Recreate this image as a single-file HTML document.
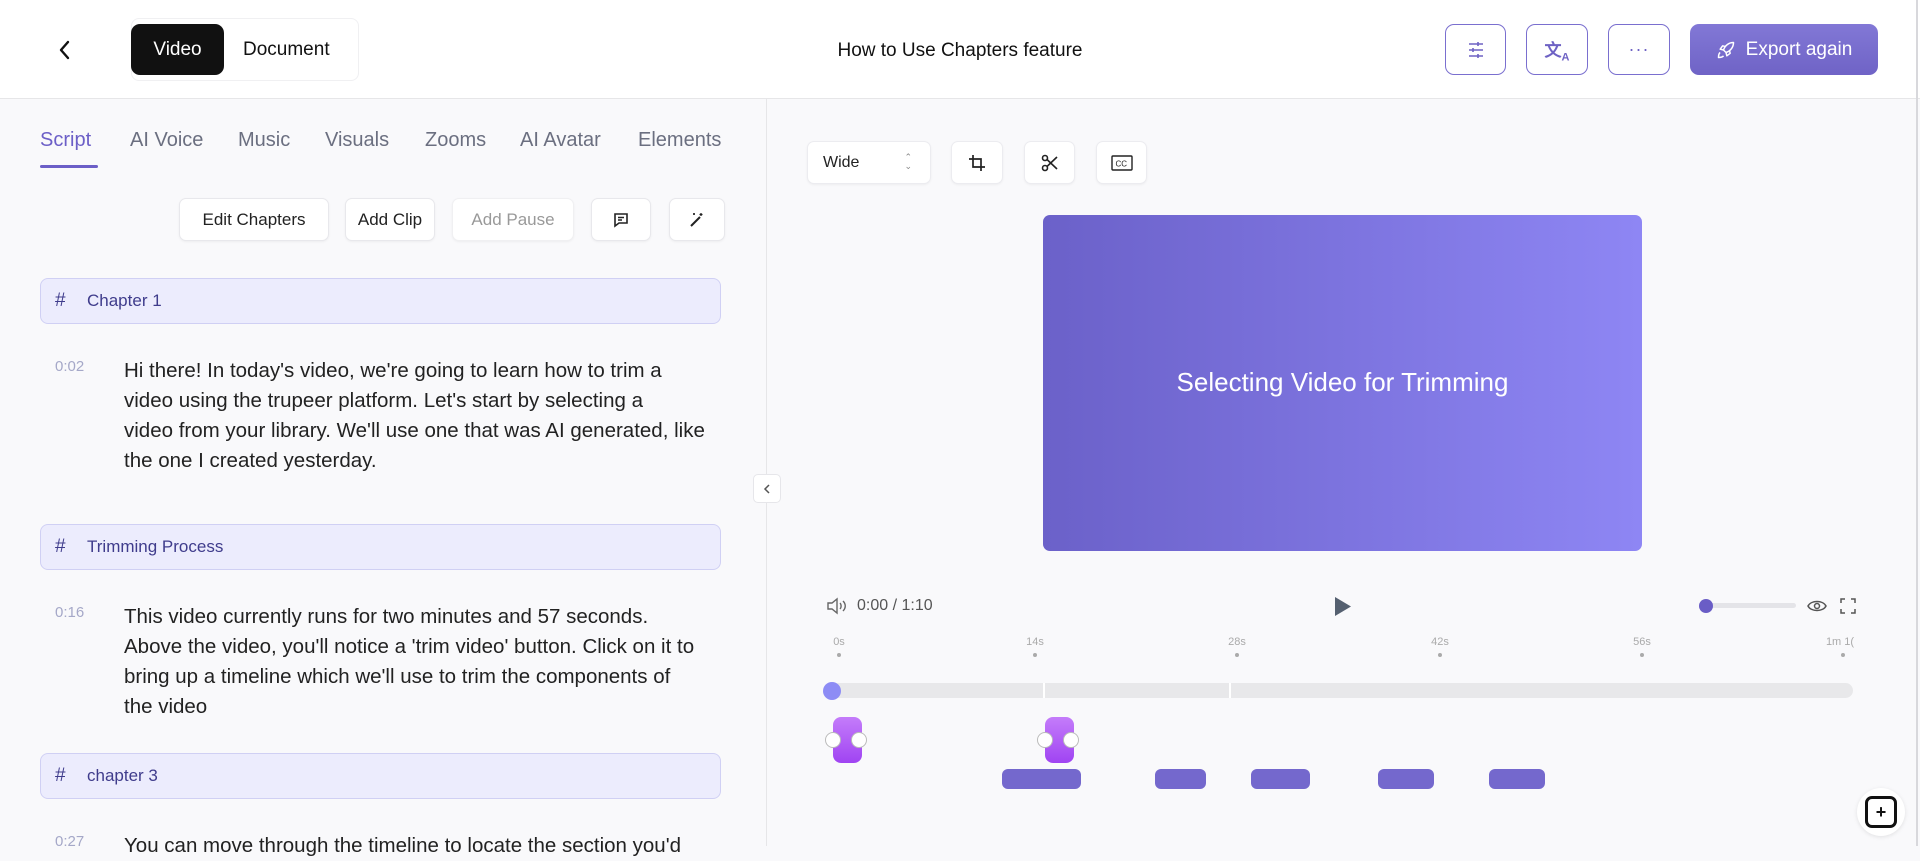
<!DOCTYPE html>
<html><head><meta charset="utf-8">
<style>
*{box-sizing:border-box;margin:0;padding:0}
body{width:1920px;height:846px;overflow:hidden;background:#f9f9fb;font-family:"Liberation Sans",sans-serif;position:relative;color:#1a1a1a}
.a{position:absolute}
.hdr{left:0;top:0;width:1920px;height:99px;background:#fff;border-bottom:1px solid #e6e6e8}
.ib{border:1.5px solid #7a6fcf;border-radius:9px;background:#fff;display:flex;align-items:center;justify-content:center;top:24px;height:51px}
.tab{top:129px;font-size:20px;color:#6b6f80}
.btn{top:198px;height:43px;background:#fff;border:1px solid #e8e8ec;border-radius:7px;display:flex;align-items:center;justify-content:center;font-size:17px;color:#222;box-shadow:0 1px 2px rgba(0,0,0,.05)}
.ch{left:40px;width:681px;height:46px;background:#ececfd;border:1.5px solid #d0d0f4;border-radius:8px;font-size:17px;color:#3f3c8c;display:flex;align-items:center}
.ch b{font-weight:normal;margin-left:14px;width:32px;font-size:19px}
.tm{left:55px;font-size:15px;color:#a5a8c8}
.p{left:124px;white-space:nowrap;font-size:20.5px;line-height:30px;color:#222}
.tb{height:43px;top:141px;background:#fff;border:1px solid #ececf0;border-radius:7px;display:flex;align-items:center;justify-content:center;box-shadow:0 1px 2px rgba(0,0,0,.05)}
.ml{top:636px;font-size:11px;color:#aaa;transform:translateX(-50%)}
.md{top:653px;width:4px;height:4px;border-radius:2px;background:#aaa;margin-left:-2px}
.bar{top:769px;height:20px;background:#7468cd;border-radius:6px}
.zc{top:717px;width:29px;height:46px;border-radius:8px;background:linear-gradient(#c47cfa,#a044f2)}
.zc i{position:absolute;top:15px;width:16px;height:16px;border-radius:8px;background:#fff;border:1.5px solid #bbb}
</style></head><body>
<div class="a hdr"></div>
<svg class="a" style="left:56px;top:39px" width="18" height="22" viewBox="0 0 18 22"><path d="M12 3L5 11l7 8" fill="none" stroke="#111" stroke-width="2.4" stroke-linecap="round" stroke-linejoin="round"/></svg>
<div class="a" style="left:131px;top:18px;width:228px;height:63px;border:1px solid #f0f0f2;border-radius:8px;background:#fff"></div>
<div class="a" style="left:131px;top:24px;width:93px;height:51px;background:#111;border-radius:9px;color:#fff;font-size:19px;display:flex;align-items:center;justify-content:center">Video</div>
<div class="a" style="left:243px;top:39px;font-size:19px;color:#111">Document</div>
<div class="a" style="left:0;width:1920px;top:40px;text-align:center;font-size:19px;color:#111;padding-left:0">How to Use Chapters feature</div>
<div class="a ib" style="left:1445px;width:61px"><svg width="20" height="20" viewBox="0 0 20 20" stroke="#6e62c4" stroke-width="1.6" fill="none"><path d="M3 4h14M3 10h14M3 16h14"/><path d="M12 2v4M7 8v4M12 14v4"/></svg></div>
<div class="a ib" style="left:1526px;width:62px"><span style="color:#6e62c4;font-size:17px;font-weight:bold">文<sub style="font-size:11px">A</sub></span></div>
<div class="a ib" style="left:1608px;width:62px"><span style="color:#6e62c4;font-size:18px;letter-spacing:1px">···</span></div>
<div class="a" style="left:1690px;top:24px;width:188px;height:51px;border-radius:9px;background:linear-gradient(#8278d6,#6f63c6);color:#fff;font-size:19px;display:flex;align-items:center;justify-content:center;gap:10px"><svg width="20" height="20" viewBox="0 0 24 24" fill="none" stroke="#fff" stroke-width="1.8" stroke-linejoin="round"><path d="M5 15c-1.5 1-2 4-2 6 2 0 5-.5 6-2M9 12c2-6 7-9 12-9 0 5-3 10-9 12zM9 12l-4-1 3-4 4 1M12 15l1 4 4-3-1-4"/></svg>Export again</div>

<div class="a" style="left:766px;top:99px;width:1px;height:747px;background:#e6e6e8"></div>
<div class="a" style="left:1916px;top:0;width:2px;height:846px;background:#d8d8dc"></div>

<div class="a tab" style="left:40px;color:#6c5fc7">Script</div>
<div class="a tab" style="left:130px">AI Voice</div>
<div class="a tab" style="left:238px">Music</div>
<div class="a tab" style="left:325px">Visuals</div>
<div class="a tab" style="left:425px">Zooms</div>
<div class="a tab" style="left:520px">AI Avatar</div>
<div class="a tab" style="left:638px">Elements</div>
<div class="a" style="left:40px;top:165px;width:58px;height:3px;background:#6c5fc7;border-radius:2px"></div>

<div class="a btn" style="left:179px;width:150px">Edit Chapters</div>
<div class="a btn" style="left:345px;width:90px">Add Clip</div>
<div class="a btn" style="left:452px;width:122px;color:#999;border-color:#f0f0f2">Add Pause</div>
<div class="a btn" style="left:591px;width:60px"><svg width="18" height="18" viewBox="0 0 18 18" fill="none" stroke="#222" stroke-width="1.6"><path d="M3 3h12v9H7l-4 3z"/><path d="M6 6.5h6M6 9h4"/></svg></div>
<div class="a btn" style="left:669px;width:56px"><svg width="18" height="18" viewBox="0 0 18 18" fill="none" stroke="#222" stroke-width="2"><path d="M3 15l9-9"/><path d="M13 2v3M11.5 3.5h3M6 2v2M5 3h2" stroke-width="1.3"/></svg></div>

<div class="a ch" style="top:278px"><b>#</b>Chapter 1</div>
<div class="a tm" style="top:358px">0:02</div>
<div class="a p" style="top:356px">Hi there! In today's video, we're going to learn how to trim a<br>video using the trupeer platform. Let's start by selecting a<br>video from your library. We'll use one that was AI generated, like<br>the one I created yesterday.</div>
<div class="a ch" style="top:524px"><b>#</b>Trimming Process</div>
<div class="a tm" style="top:604px">0:16</div>
<div class="a p" style="top:602px">This video currently runs for two minutes and 57 seconds.<br>Above the video, you'll notice a 'trim video' button. Click on it to<br>bring up a timeline which we'll use to trim the components of<br>the video</div>
<div class="a ch" style="top:753px"><b>#</b>chapter 3</div>
<div class="a tm" style="top:833px">0:27</div>
<div class="a p" style="top:831px">You can move through the timeline to locate the section you'd</div>

<div class="a" style="left:753px;top:474px;width:28px;height:29px;background:#fff;border:1px solid #e6e6ea;border-radius:5px;display:flex;align-items:center;justify-content:center"><svg width="10" height="12"><path d="M7 2L3 6l4 4" fill="none" stroke="#555" stroke-width="1.5"/></svg></div>

<div class="a tb" style="left:807px;width:124px;justify-content:flex-start;padding-left:15px;font-size:16px;color:#222">Wide<span style="position:absolute;right:18px;top:11px;font-size:9px;color:#888;line-height:9px">⌃<br>⌄</span></div>
<div class="a tb" style="left:951px;width:52px"><svg width="18" height="18" viewBox="0 0 18 18" fill="none" stroke="#222" stroke-width="1.7"><path d="M5 1v12h12M1 5h12v12"/></svg></div>
<div class="a tb" style="left:1024px;width:51px"><svg width="18" height="18" viewBox="0 0 18 18" fill="none" stroke="#222" stroke-width="1.6"><circle cx="4" cy="14" r="2.5"/><circle cx="4" cy="4" r="2.5"/><path d="M6 12.5L16 3M6 5.5L16 15"/></svg></div>
<div class="a tb" style="left:1096px;width:51px"><svg width="22" height="16" viewBox="0 0 22 16" fill="none" stroke="#222" stroke-width="1.4"><rect x="1" y="1" width="20" height="14" rx="1"/><text x="4.5" y="11.5" font-size="8" font-family="Liberation Sans" fill="#222" stroke="none">CC</text></svg></div>

<div class="a" style="left:1043px;top:215px;width:599px;height:336px;border-radius:7px;background:linear-gradient(90deg,#6b61c9,#8e86f4);color:#fff;font-size:26px;display:flex;align-items:center;justify-content:center;padding-bottom:2px">Selecting Video for Trimming</div>

<svg class="a" style="left:826px;top:597px" width="22" height="18" viewBox="0 0 22 18" fill="none" stroke="#666" stroke-width="1.4"><path d="M2 6h4l5-4v14l-5-4H2z"/><path d="M14 6c1.5 1.5 1.5 4.5 0 6M17 4c3 3 3 7 0 10"/></svg>
<div class="a" style="left:857px;top:597px;font-size:16px;color:#555">0:00 / 1:10</div>
<svg class="a" style="left:1334px;top:596px" width="18" height="21"><path d="M1 1L17 10.5 1 20z" fill="#556070"/></svg>
<div class="a" style="left:1706px;top:603px;width:90px;height:5px;border-radius:3px;background:#e4e4e8"></div>
<div class="a" style="left:1699px;top:599px;width:14px;height:14px;border-radius:7px;background:#6a5dc6"></div>
<svg class="a" style="left:1807px;top:597px" width="20" height="18" viewBox="0 0 20 18" fill="none" stroke="#555" stroke-width="1.5"><path d="M1 9C4 3 16 3 19 9 16 15 4 15 1 9z"/><circle cx="10" cy="9" r="2.5"/></svg>
<svg class="a" style="left:1840px;top:598px" width="16" height="16" fill="none" stroke="#555" stroke-width="1.5"><path d="M1 5V1h4M11 1h4v4M15 11v4h-4M5 15H1v-4"/></svg>

<div class="a ml" style="left:839px">0s</div><div class="a md" style="left:839px"></div>
<div class="a ml" style="left:1035px">14s</div><div class="a md" style="left:1035px"></div>
<div class="a ml" style="left:1237px">28s</div><div class="a md" style="left:1237px"></div>
<div class="a ml" style="left:1440px">42s</div><div class="a md" style="left:1440px"></div>
<div class="a ml" style="left:1642px">56s</div><div class="a md" style="left:1642px"></div>
<div class="a ml" style="left:1840px">1m 1(</div><div class="a md" style="left:1843px"></div>

<div class="a" style="left:831px;top:683px;width:1022px;height:15px;border-radius:8px;background:#e8e8ea"></div>
<div class="a" style="left:1043px;top:683px;width:2px;height:15px;background:#fff"></div>
<div class="a" style="left:1229px;top:683px;width:2px;height:15px;background:#fff"></div>
<div class="a" style="left:823px;top:682px;width:18px;height:18px;border-radius:9px;background:#8d8cf5"></div>

<div class="a zc" style="left:833px"><i style="left:-8px"></i><i style="left:18px"></i></div>
<div class="a zc" style="left:1045px"><i style="left:-8px"></i><i style="left:18px"></i></div>

<div class="a bar" style="left:1002px;width:79px"></div>
<div class="a bar" style="left:1155px;width:51px"></div>
<div class="a bar" style="left:1251px;width:59px"></div>
<div class="a bar" style="left:1378px;width:56px"></div>
<div class="a bar" style="left:1489px;width:56px"></div>

<div class="a" style="left:1857px;top:788px;width:48px;height:48px;border-radius:24px;background:#fff;box-shadow:0 1px 4px rgba(0,0,0,.1);display:flex;align-items:center;justify-content:center"><div style="width:32px;height:32px;border:3px solid #111;border-radius:7px;display:flex;align-items:center;justify-content:center;font-size:18px;font-weight:bold;color:#111">+</div></div>
</body></html>
